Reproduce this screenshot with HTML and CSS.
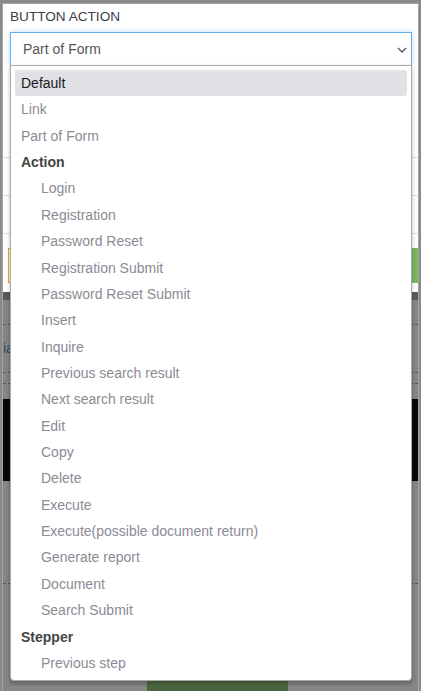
FILE: index.html
```html
<!DOCTYPE html>
<html>
<head>
<meta charset="utf-8">
<link rel="stylesheet" href="styles.css">
</head>
<body>
<div class="panel">
  <div class="field">
    <div class="label">BUTTON ACTION</div>
    <div class="select">
      <span class="value">Part of Form</span>
      <svg class="chev" width="10" height="6" viewBox="0 0 10 6"><path d="M1 1 L5 5 L9 1" fill="none" stroke="#555" stroke-width="1.3"/></svg>
    </div>
  </div>
  <div class="bg-top">
    <div class="row r1"></div>
    <div class="row r2"></div>
    <div class="row r3"></div>
    <div class="actions">
      <div class="orange"></div>
      <div class="green"></div>
    </div>
  </div>
  <div class="preview">
    <div class="pv-strip"></div>
    <div class="pv-line l1"></div>
    <div class="pv-text"><span class="blue">ia</span></div>
    <div class="pv-line l2"></div>
    <div class="pv-line l3"></div>
    <div class="pv-image"></div>
    <div class="pv-space"></div>
    <div class="pv-line l4"></div>
    <div class="pv-foot"><div class="exec">Execute</div></div>
  </div>

  <ul class="menu">
    <li class="opt active">Default</li>
    <li class="opt">Link</li>
    <li class="opt">Part of Form</li>
    <li class="group">Action</li>
    <li class="opt sub">Login</li>
    <li class="opt sub">Registration</li>
    <li class="opt sub">Password Reset</li>
    <li class="opt sub">Registration Submit</li>
    <li class="opt sub">Password Reset Submit</li>
    <li class="opt sub">Insert</li>
    <li class="opt sub">Inquire</li>
    <li class="opt sub">Previous search result</li>
    <li class="opt sub">Next search result</li>
    <li class="opt sub">Edit</li>
    <li class="opt sub">Copy</li>
    <li class="opt sub">Delete</li>
    <li class="opt sub">Execute</li>
    <li class="opt sub">Execute(possible document return)</li>
    <li class="opt sub">Generate report</li>
    <li class="opt sub">Document</li>
    <li class="opt sub">Search Submit</li>
    <li class="group">Stepper</li>
    <li class="opt sub">Previous step</li>
  </ul>
</div>
</body>
</html>
```

FILE: styles.css
```css
html, body {
  margin: 0;
  padding: 0;
}
body {
  width: 421px;
  height: 691px;
  overflow: hidden;
  background: #8a8a8a;
  font-family: "Liberation Sans", Arial, sans-serif;
}
.panel {
  position: relative;
  margin: 3px 2px 0 2px;
  border: 1px solid #a4a4a4;
  border-bottom: none;
  background: #fff;
  height: 700px;
}
.field {
  padding: 5px 6px 0 7px;
}
.label {
  font-size: 13.6px;
  line-height: 16px;
  color: #3b4046;
}
.select {
  margin-top: 7px;
  height: 34px;
  box-sizing: border-box;
  border: 1px solid #66afe9;
  box-shadow: 0 0 5px rgba(102, 175, 233, 0.45);
  display: flex;
  align-items: center;
  justify-content: space-between;
  padding: 0 4px 0 12px;
  background: #fff;
}
.value {
  font-size: 14px;
  color: #555;
}
.chev {
  display: block;
  margin-top: 1px;
}
.bg-top {
  height: 226px;
  display: flex;
  flex-direction: column;
}
.row {
  border-bottom: 1px solid #dedede;
  box-sizing: border-box;
}
.r1 { height: 92px; }
.r2 { height: 38px; }
.r3 { height: 38px; }
.actions {
  display: flex;
  justify-content: space-between;
  margin-top: 14px;
  height: 35px;
}
.orange {
  margin-left: 5px;
  width: 200px;
  border: 1px solid #f0a020;
  box-sizing: border-box;
}
.green {
  width: 60px;
  background: #7cb860;
}
.preview {
  background: #7f7f7f;
  height: 400px;
  display: flex;
  flex-direction: column;
  box-shadow: inset 0 0 0 6px #868686;
}
.pv-strip {
  height: 8px;
  background: #5a5a5a;
}
.pv-line {
  border-bottom: 1px dashed #555;
}
.l1 { margin-top: 24px; }
.pv-text {
  height: 49px;
  display: flex;
  align-items: center;
  font-size: 14px;
}
.blue {
  color: #1f4d6e;
  margin-left: 0;
}
.l2 { margin-top: 0; }
.l3 { margin-top: 10px; }
.pv-image {
  margin-top: 15px;
  height: 85px;
  background: #060808;
}
.pv-space { height: 106px; }
.l4 { margin-top: 0; }
.pv-foot {
  margin-top: 78px;
  display: flex;
  justify-content: center;
}
.exec {
  margin-left: 14px;
  width: 141px;
  height: 30px;
  background: #4b6540;
  color: #111;
  font-size: 16px;
  text-align: center;
  line-height: 26px;
}
.menu {
  position: absolute;
  top: 61px;
  left: 7px;
  width: 402px;
  box-sizing: border-box;
  margin: 0;
  padding: 4px 4px;
  list-style: none;
  background: #fff;
  border: 1px solid #aaa;
  border-radius: 0 0 4px 4px;
  box-shadow: 0 2px 4px rgba(0, 0, 0, 0.25);
}
.menu li {
  height: 26.36px;
  line-height: 26.36px;
  font-size: 14px;
  padding-left: 6px;
  border-radius: 3px;
  white-space: nowrap;
}
.opt {
  color: #8b8b94;
}
.opt.sub {
  padding-left: 26px;
}
.opt.active {
  background: #e1e1e6;
  color: #1a1a1a;
}
.group {
  font-weight: bold;
  color: #444;
}
```
